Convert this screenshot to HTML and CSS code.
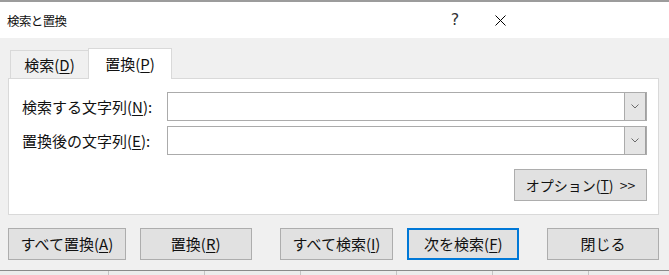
FILE: index.html
```html
<!DOCTYPE html>
<html lang="ja">
<head>
  <meta charset="UTF-8">
  <title>検索と置換</title>
  <link rel="stylesheet" href="styles.css">
</head>

<body>

  <div class="sheet-top"></div>

  <div class="titlebar">
    <span class="title">検索と置換</span>
    <span class="help">?</span>
    <span class="close">
      <svg width="11" height="11" viewBox="0 0 11 11">
        <path d="M0.5 0.5 L10.5 10.5 M10.5 0.5 L0.5 10.5" stroke="#000" stroke-width="1" fill="none"/>
      </svg>
    </span>
  </div>

  <div class="dialog-body">
    <div class="tabs">
      <div class="tab">検索(<u>D</u>)</div>
      <div class="tab active">置換(<u>P</u>)</div>
    </div>

    <div class="panel">
      <div class="field">
        <label>検索する文字列(<u>N</u>):</label>
        <div class="combo">
          <input type="text">
          <span class="drop">
            <svg width="8" height="5" viewBox="0 0 8 5"><path d="M0.5 0.5 L4 4 L7.5 0.5" stroke="#6a6a6a" fill="none"/></svg>
          </span>
        </div>
      </div>
      <div class="field">
        <label>置換後の文字列(<u>E</u>):</label>
        <div class="combo">
          <input type="text">
          <span class="drop">
            <svg width="8" height="5" viewBox="0 0 8 5"><path d="M0.5 0.5 L4 4 L7.5 0.5" stroke="#6a6a6a" fill="none"/></svg>
          </span>
        </div>
      </div>
      <div class="options-row">
        <button class="btn btn-options">オプション(<u>T</u>)&nbsp; &gt;&gt;</button>
      </div>
    </div>

    <div class="actions">
      <button class="btn btn-replace-all">すべて置換(<u>A</u>)</button>
      <button class="btn btn-replace">置換(<u>R</u>)</button>
      <button class="btn btn-find-all">すべて検索(<u>I</u>)</button>
      <button class="btn btn-find-next">次を検索(<u>F</u>)</button>
      <button class="btn btn-close">閉じる</button>
    </div>
  </div>

  <div class="sheet-bottom"></div>

</body>
</html>
```

FILE: styles.css
```css
body {
  margin: 0;
  font-family: "Noto Sans CJK JP", "Noto Sans", sans-serif;
  font-size: 15px;
  line-height: 1.2;
  color: #111;
  background: #f0f0f0;
}

u {
  text-underline-offset: 2px;
}

.sheet-top {
  height: 2px;
  background: #9c9c9c;
}

/* title bar */
.titlebar {
  display: flex;
  align-items: center;
  height: 36px;
  background: #fff;
}

.title {
  margin-left: 7px;
  font-size: 12.5px;
  letter-spacing: -0.6px;
}

.help {
  margin-left: auto;
  width: 20px;
  text-align: center;
  font-family: "DejaVu Sans", sans-serif;
  font-size: 16px;
  color: #333;
}

.close {
  display: flex;
  align-items: center;
  justify-content: center;
  width: 20px;
  height: 20px;
  margin-left: 25px;
  margin-right: 159px;
}

/* dialog body */
.dialog-body {
  padding: 10px 10px 10px 8px;
  background: #f0f0f0;
  border-bottom: 1px solid #8a8a8a;
}

.tabs {
  display: flex;
  align-items: flex-end;
  margin-left: 2px;
  margin-bottom: -1px;
}

.tab {
  display: flex;
  align-items: center;
  justify-content: center;
  width: 77px;
  height: 27px;
  background: #f0f0f0;
  border: 1px solid #d9d9d9;
  border-right: none;
}

.tab.active {
  position: relative;
  width: 82px;
  height: 30px;
  background: #fff;
  border-right: 1px solid #d9d9d9;
  border-bottom: none;
}

.panel {
  padding: 13px 11px 13px 13px;
  background: #fff;
  border: 1px solid #d9d9d9;
}

.field {
  display: flex;
  align-items: center;
  height: 29px;
}

.field + .field {
  margin-top: 5px;
}

.field label {
  width: 145px;
  flex-shrink: 0;
}

.combo {
  flex: 1;
  display: flex;
  height: 29px;
  box-sizing: border-box;
  background: #fff;
  border: 1px solid #ababab;
}

.combo input {
  flex: 1;
  min-width: 0;
  border: none;
  outline: none;
  background: transparent;
}

.drop {
  display: flex;
  align-items: center;
  justify-content: center;
  width: 20px;
  background: #e5e5e5;
  border-left: 1px solid #ababab;
  border-right: 1px solid #a0a0a0;
}

.options-row {
  display: flex;
  justify-content: flex-end;
  margin-top: 14px;
}

/* buttons */
.btn {
  height: 32px;
  box-sizing: border-box;
  padding: 0;
  font: inherit;
  color: #111;
  background: #e1e1e1;
  border: 1px solid #adadad;
}

.btn-options {
  width: 133px;
  font-size: 14px;
}

.actions {
  display: flex;
  margin-top: 13px;
}

.btn-replace-all {
  width: 118px;
}

.btn-replace {
  width: 112px;
  margin-left: 14px;
}

.btn-find-all {
  width: 114px;
  margin-left: 28px;
}

.btn-find-next {
  width: 112px;
  margin-left: 14px;
  border: 2px solid #0078d7;
}

.btn-close {
  width: 112px;
  margin-left: 28px;
}

.sheet-bottom {
  height: 4px;
  background-color: #ececec;
  background-image: repeating-linear-gradient(to right, transparent 0 95px, #c4c4c4 95px 96px);
  background-position: 13px 0;
}
```
